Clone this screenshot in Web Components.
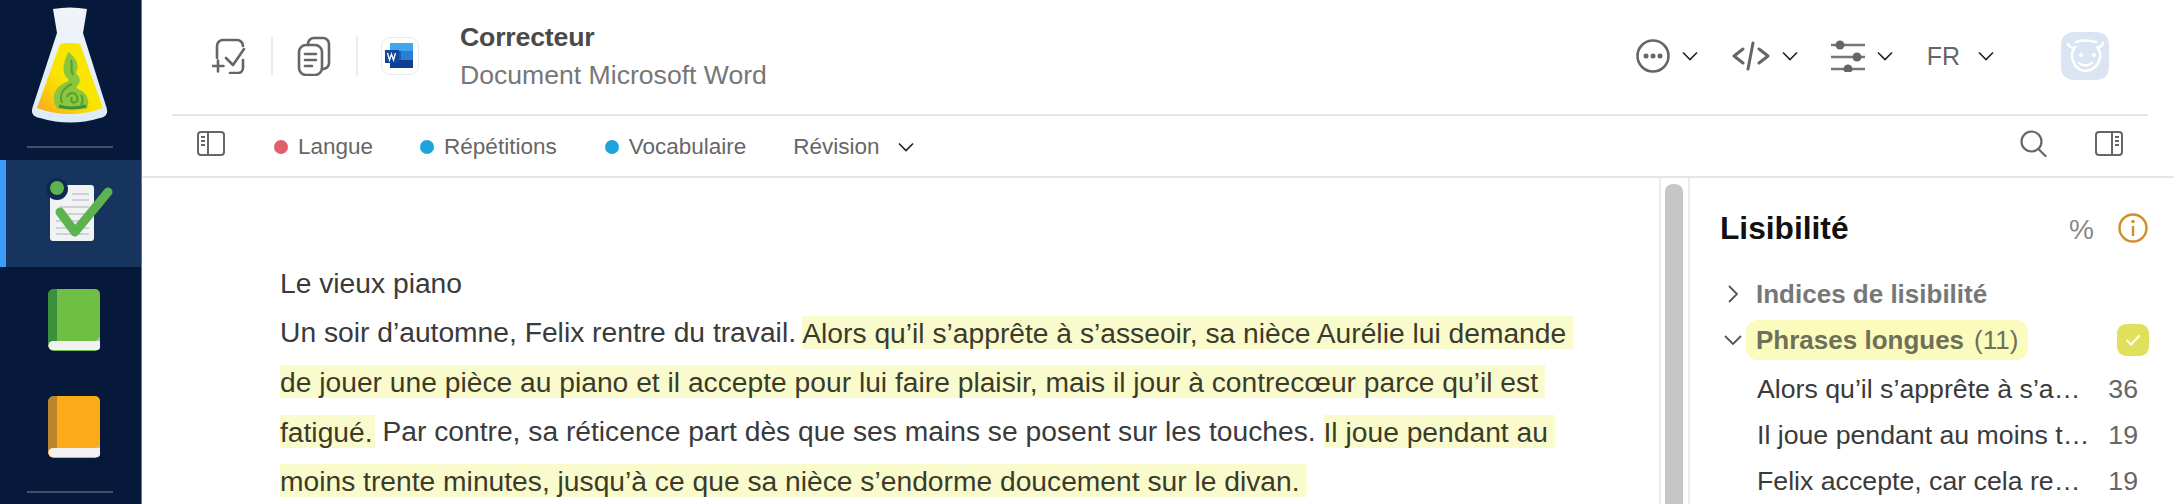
<!DOCTYPE html>
<html lang="fr">
<head>
<meta charset="utf-8">
<title>Correcteur</title>
<style>
  html, body { margin: 0; height: 100%; overflow: hidden; background: #fff; }
  body { font-family: "Liberation Sans", Arial, sans-serif; color: #3a3a3a; }
  mark { color: #3b3b2c; }
</style>
</head>
<body>
<lt-app>
  <lt-sidebar slot="nav"></lt-sidebar>
  <lt-header slot="header"></lt-header>
  <lt-toolbar slot="toolbar"></lt-toolbar>
  <lt-document slot="doc">Le vieux piano<br>Un soir d’automne, Felix rentre du travail. <mark>Alors qu’il s’apprête à s’asseoir, sa nièce Aurélie lui demande</mark><br><mark>de jouer une pièce au piano et il accepte pour lui faire plaisir, mais il jour à contrecœur parce qu’il est</mark><br><mark class="tight">fatigué.</mark> Par contre, sa réticence part dès que ses mains se posent sur les touches. <mark>Il joue pendant au</mark><br><mark>moins trente minutes, jusqu’à ce que sa nièce s’endorme doucement sur le divan.</mark></lt-document>
  <lt-panel slot="panel">
    <lt-row count="36">Alors qu’il s’apprête à s’a…</lt-row>
    <lt-row count="19">Il joue pendant au moins t…</lt-row>
    <lt-row count="19">Felix accepte, car cela re…</lt-row>
  </lt-panel>
</lt-app>

<script>
class LtApp extends HTMLElement {
  constructor() {
    super();
    this.attachShadow({ mode: 'open' });
  }

  connectedCallback() {
    this.shadowRoot.innerHTML = `
      <style>
        :host {
          display: grid;
          grid-template-columns: 142px 1517px 31px 1fr;
          grid-template-rows: 116px 62px 1fr;
          width: 2174px;
          height: 504px;
          overflow: hidden;
        }
        .nav { grid-row: 1 / 4; min-height: 0; }
        .header { grid-column: 2 / 5; }
        .toolbar { grid-column: 2 / 5; }
        .gutter {
          border-left: 2px solid #ececec;
          border-right: 2px solid #ececec;
          padding: 6px 5px 0 4px;
          box-sizing: border-box;
        }
        .thumb { height: 400px; background: #c6c6c6; border-radius: 8px; }
      </style>
      <div class="nav"><slot name="nav"></slot></div>
      <div class="header"><slot name="header"></slot></div>
      <div class="toolbar"><slot name="toolbar"></slot></div>
      <slot name="doc"></slot>
      <div class="gutter"><div class="thumb"></div></div>
      <slot name="panel"></slot>
    `;
  }
}

class LtSidebar extends HTMLElement {
  constructor() {
    super();
    this.attachShadow({ mode: 'open' });
  }

  book(body, spine) {
    return `
      <svg width="54" height="64" viewBox="0 0 54 64">
        <path d="M7 1h41a5 5 0 0 1 5 5v52a5 5 0 0 1-5 5H7a6 6 0 0 1-6-6V7a6 6 0 0 1 6-6z" fill="${body}"/>
        <path d="M10 1H7a6 6 0 0 0-6 6v50h9z" fill="${spine}"/>
        <path d="M6 53h47v6a3 3 0 0 1-3 3H6a4.500 4.500 0 0 1 0-9z" fill="#f1f1f1"/>
        <path d="M7 53h46v-4q-2 3-6 4z" fill="#bdbdbd"/>
      </svg>`;
  }

  connectedCallback() {
    this.shadowRoot.innerHTML = `
      <style>
        :host {
          display: flex;
          flex-direction: column;
          height: 504px;
          background: #07193a;
          border-right: 1px solid #5d7696;
          box-sizing: border-box;
        }
        svg { display: block; }
        .logo { height: 146px; }
        hr {
          flex: none;
          width: 86px;
          height: 2px;
          margin: 0 0 0 27px;
          border: 0;
          background: #414f69;
        }
        .active {
          margin-top: 12px;
          height: 107px;
          background: #17345f;
          border-left: 6px solid #3b9cff;
          box-sizing: border-box;
        }
        .books {
          display: flex;
          flex-direction: column;
          gap: 43px;
          padding: 21px 0 0 47px;
          height: 224px;
          box-sizing: border-box;
        }
      </style>
      <svg class="logo" width="141" height="146" viewBox="0 0 141 146">
        <defs>
          <linearGradient id="liq" x1="0.05" y1="1" x2="0.45" y2="0.5">
            <stop offset="0" stop-color="#fba61c"/>
            <stop offset="0.55" stop-color="#fbcf0a"/>
            <stop offset="1" stop-color="#f9e600"/>
          </linearGradient>
          <linearGradient id="glass" x1="0" y1="0" x2="0" y2="1">
            <stop offset="0" stop-color="#f1f4f8"/>
            <stop offset="1" stop-color="#dcebf7"/>
          </linearGradient>
        </defs>
        <path d="M53 9Q70 6 87 9L83 33 106 106Q110 116 100 118 70 127 40 118 29 116 33 106L57 33Z" fill="url(#glass)"/>
        <path d="M60 44Q70 42 80 44L103 108Q70 120 37 108Z" fill="url(#liq)"/>
        <path d="M69 54C75 60 78 65 75 71 72 76 80 75 78 82 76 87 72 86 78 91 86 94 88 101 86 107 72 109 66 108 58 107 53 99 55 91 62 86 69 82 73 81 68 77 63 72 65 62 69 54Z" fill="#8cc63f" stroke="#8cc63f" stroke-width="3" stroke-linejoin="round"/>
        <path d="M71 60C73 66 70 70 73 75M72 84C63 88 59 95 62 103M67 97C71 89 79 94 77 101 73 105 70 101 72 97M81 95C83 98 83 102 81 105" fill="none" stroke="#559f2e" stroke-width="2"/>
        <path d="M59 106Q71 110 86 106" fill="none" stroke="#3e9430" stroke-width="3"/>
      </svg>
      <hr>
      <div class="active">
        <svg width="112" height="107" viewBox="0 0 112 107">
          <path d="M46 25h39a3 3 0 0 1 3 3v50a3 3 0 0 1-3 3H47a3 3 0 0 1-3-3V30z" fill="#f0f2f4"/>
          <circle cx="51" cy="29" r="11" fill="#0e2a52"/>
          <circle cx="51" cy="28" r="7" fill="#5cb34f"/>
          <path d="M66 34h17M66 40h17M54 47h29M54 54h29M50 61h33M50 68h33M50 74h33" stroke="#cfd2d4" stroke-width="2"/>
          <path d="M54 52L69 72 102 32" fill="none" stroke="#5cb34f" stroke-width="9" stroke-linecap="round" stroke-linejoin="round"/>
        </svg>
      </div>
      <div class="books">
        ${this.book('#6fbf44', '#3a8f3c')}
        ${this.book('#fdaa19', '#b9852d')}
      </div>
      <hr>
    `;
  }
}

class LtChev extends HTMLElement {
  constructor() {
    super();
    this.attachShadow({ mode: 'open' });
    this.shadowRoot.innerHTML = `
      <style>
        :host { display: block; width: 16px; height: 10px; }
        svg { display: block; }
      </style>
      <svg width="16" height="10" viewBox="0 0 16 10"><path d="M1 1.500l7 7 7-7" fill="none" stroke="#222" stroke-width="1.600"/></svg>
    `;
  }
}

class LtHeader extends HTMLElement {
  constructor() {
    super();
    this.attachShadow({ mode: 'open' });
  }

  connectedCallback() {
    this.shadowRoot.innerHTML = `
      <style>
        :host {
          display: flex;
          align-items: center;
          height: 116px;
          margin: 0 26px 0 30px;
          padding: 0 0 2px 40px;
          border-bottom: 2px solid #e6e6e6;
          box-sizing: border-box;
        }
        svg { display: block; flex: none; }
        .rule { flex: none; width: 2px; height: 40px; background: #ececec; }
        .titles { margin-left: 41px; }
        .t1 { font-size: 26.700px; line-height: 30px; font-weight: 700; color: #4a4a4a; letter-spacing: -0.2px; }
        .t2 { font-size: 26.600px; line-height: 30px; margin-top: 8px; color: #777; }
        .spacer { flex: 1; }
        .fr { font-size: 25px; color: #666; }
      </style>
      <svg width="34" height="36" viewBox="0 0 34 36" fill="none" stroke="#666" stroke-width="2.600" stroke-linecap="round" stroke-linejoin="round">
        <path d="M5 20V8a6 6 0 0 1 6-6h14a6 6 0 0 1 6 6v0M31 22v8a5 5 0 0 1-5 5h-8"/>
        <path d="M14 20l7 7 11-16M0.500 28h11M6 22.500v11"/>
      </svg>
      <span class="rule" style="margin-left:25px"></span>
      <svg style="margin-left:24px" width="34" height="40" viewBox="0 0 34 40" fill="none" stroke="#666" stroke-width="2.600" stroke-linecap="round" stroke-linejoin="round">
        <rect x="2" y="9" width="23" height="30" rx="7"/>
        <path d="M11 9V8a6 6 0 0 1 6-6h9a6 6 0 0 1 6 6v19a6 6 0 0 1-6 6h-1"/>
        <path d="M8 18h11M8 24h11M8 30h7"/>
      </svg>
      <span class="rule" style="margin-left:25px"></span>
      <svg style="margin-left:23px" width="38" height="38" viewBox="0 0 38 38">
        <rect x="0.500" y="0.500" width="37" height="37" rx="9" fill="#fff" stroke="#e8e8e8"/>
        <path d="M9 6h23v25H9z" fill="#185abd"/>
        <path d="M9 6h23v8H9z" fill="#41a5ee"/>
        <path d="M20 14h12v9H20z" fill="#2b7cd3"/>
        <path d="M9 23h23v8H9z" fill="#103f91"/>
        <rect x="4" y="13" width="14" height="13" fill="#12479f"/>
        <path d="M6.500 16l2 7 2-6 2 6 2-7" fill="none" stroke="#fff" stroke-width="1.300"/>
      </svg>
      <div class="titles">
        <div class="t1">Correcteur</div>
        <div class="t2">Document Microsoft Word</div>
      </div>
      <span class="spacer"></span>
      <svg width="34" height="34" viewBox="0 0 34 34">
        <circle cx="17" cy="17" r="15.500" fill="none" stroke="#666" stroke-width="2.600"/>
        <circle cx="10" cy="17" r="2.500" fill="#666"/><circle cx="17" cy="17" r="2.500" fill="#666"/><circle cx="24" cy="17" r="2.500" fill="#666"/>
      </svg>
      <lt-chev style="margin-left:12px"></lt-chev>
      <svg style="margin-left:34px" width="38" height="30" viewBox="0 0 38 30" fill="none" stroke="#666" stroke-width="3" stroke-linecap="round" stroke-linejoin="round">
        <path d="M11 8l-9 7 9 7M27 8l9 7-9 7M21 2l-5 26"/>
      </svg>
      <lt-chev style="margin-left:12px"></lt-chev>
      <svg style="margin-left:33px" width="34" height="32" viewBox="0 0 34 32">
        <path d="M0 5h34M0 17h34M0 29h34" stroke="#777" stroke-width="2.600"/>
        <circle cx="9" cy="5" r="4.500" fill="#666"/><circle cx="26" cy="17" r="4.500" fill="#666"/><circle cx="17" cy="29" r="4.500" fill="#666"/>
      </svg>
      <lt-chev style="margin-left:12px"></lt-chev>
      <span class="fr" style="margin-left:34px">FR</span>
      <lt-chev style="margin-left:18px"></lt-chev>
      <svg style="margin:0 39px 0 67px" width="48" height="48" viewBox="0 0 48 48">
        <path d="M13 0h22c8 0 13 5 13 13v22c0 8-5 13-13 13H13C5 48 0 43 0 35V13C0 5 5 0 13 0z" fill="#dbe4f3"/>
        <g fill="none" stroke="#fff" stroke-width="2.500" stroke-linecap="round" stroke-linejoin="round">
          <path d="M15 10q9-3 20 0"/>
          <path d="M7 12q2 4 6 4M42 11q-1 4-5 5"/>
          <path d="M14 15q-4 6-3 11 3 12 13 13 12-1 15-13 1-6-3-11"/>
          <path d="M18 31q6 5 13 0" stroke-width="2.200"/>
        </g>
        <circle cx="20" cy="23" r="2" fill="#fff"/><circle cx="33" cy="23" r="2" fill="#fff"/>
      </svg>
    `;
  }
}

class LtToolbar extends HTMLElement {
  constructor() {
    super();
    this.attachShadow({ mode: 'open' });
  }

  connectedCallback() {
    this.shadowRoot.innerHTML = `
      <style>
        :host {
          display: flex;
          align-items: center;
          height: 62px;
          padding: 1px 51px 0 55px;
          border-bottom: 2px solid #e6e6e6;
          box-sizing: border-box;
          font-size: 22.500px;
          color: #666;
        }
        svg { display: block; flex: none; }
        .up { margin-top: -7px; }
        .dot { flex: none; width: 14px; height: 14px; border-radius: 50%; margin-right: 10px; }
        .spacer { flex: 1; }
      </style>
      <svg class="up" width="28" height="25" viewBox="0 0 28 25" fill="none" stroke="#666" stroke-width="2">
        <rect x="1" y="1" width="26" height="23" rx="3"/>
        <path d="M11 1v23M4 6h4M4 10h4M4 14h4" />
      </svg>
      <span class="dot" style="margin-left:49px;background:#e0606e"></span><span>Langue</span>
      <span class="dot" style="margin-left:47px;background:#1fa3dc"></span><span>Répétitions</span>
      <span class="dot" style="margin-left:48px;background:#1fa3dc"></span><span>Vocabulaire</span>
      <span style="margin-left:47px">Révision</span>
      <lt-chev style="margin-left:18px"></lt-chev>
      <span class="spacer"></span>
      <svg class="up" width="27" height="27" viewBox="0 0 27 27" fill="none" stroke="#666" stroke-width="2.200" stroke-linecap="round">
        <circle cx="11.500" cy="11.500" r="10"/><path d="M18.500 19l7 7"/>
      </svg>
      <svg class="up" style="margin-left:48px" width="28" height="25" viewBox="0 0 28 25" fill="none" stroke="#666" stroke-width="2">
        <rect x="1" y="1" width="26" height="23" rx="3"/>
        <path d="M17 1v23M20 6h4M20 10h4M20 14h4"/>
      </svg>
    `;
  }
}

class LtDocument extends HTMLElement {
  constructor() {
    super();
    this.attachShadow({ mode: 'open' });
  }

  connectedCallback() {
    this.shadowRoot.innerHTML = `
      <style>
        :host {
          display: block;
          padding: 81px 0 0 138px;
          font-size: 28.230px;
          line-height: 49.400px;
          color: #3a3a3a;
          white-space: nowrap;
          overflow: hidden;
        }
        ::slotted(mark) { background: #fafbcd; padding: 0.5px 7px 0.5px 0; }
        ::slotted(mark.tight) { padding-right: 2px; }
      </style>
      <slot></slot>
    `;
  }
}

class LtRow extends HTMLElement {
  constructor() {
    super();
    this.attachShadow({ mode: 'open' });
  }

  connectedCallback() {
    this.shadowRoot.innerHTML = `
      <style>
        :host {
          display: flex;
          justify-content: space-between;
          height: 46px;
          line-height: 46px;
          padding: 0 36px 0 67px;
          font-size: 26.700px;
          color: #3a3a3a;
          white-space: nowrap;
        }
        .n { color: #666; }
      </style>
      <span><slot></slot></span>
      <span class="n">${this.getAttribute('count')}</span>
    `;
  }
}

class LtPanel extends HTMLElement {
  constructor() {
    super();
    this.attachShadow({ mode: 'open' });
  }

  connectedCallback() {
    this.shadowRoot.innerHTML = `
      <style>
        :host { display: block; }
        svg { display: block; flex: none; }
        .head {
          display: flex;
          align-items: center;
          height: 36px;
          margin-top: 32px;
          padding: 0 26px 0 30px;
        }
        h2 { flex: 1; margin: 0; font-size: 31.700px; font-weight: 700; color: #111; }
        .pct { font-size: 28px; font-weight: 400; color: #888; margin: 4px 24px 0 0; }
        .group {
          display: flex;
          align-items: center;
          height: 40px;
          font-size: 26px;
          font-weight: 700;
          color: #777;
        }
        .g1 { margin-top: 28px; padding-left: 38px; gap: 18px; }
        .g2 { margin-top: 6px; padding-left: 34px; }
        .pill {
          display: flex;
          gap: 10px;
          align-items: center;
          height: 40px;
          margin-left: 4px;
          padding: 0 10px;
          background: #fafbbd;
          border-radius: 12px;
          color: #6f7058;
        }
        .pill i { font-style: normal; font-weight: 400; }
        .box {
          display: flex;
          align-items: center;
          justify-content: center;
          width: 32px;
          height: 32px;
          margin-left: 89px;
          background: #e1e05c;
          border-radius: 9px;
        }
        .rows { margin-top: 6px; }
      </style>
      <div class="head">
        <h2>Lisibilité</h2>
        <span class="pct">%</span>
        <svg width="30" height="30" viewBox="0 0 30 30">
          <circle cx="15" cy="15" r="13.500" fill="none" stroke="#d08f2a" stroke-width="2.400"/>
          <circle cx="15" cy="8.500" r="1.700" fill="#d08f2a"/>
          <path d="M15 13v10" stroke="#d08f2a" stroke-width="2.400"/>
        </svg>
      </div>
      <div class="group g1">
        <svg width="10" height="18" viewBox="0 0 10 18"><path d="M1 1l8 8-8 8" fill="none" stroke="#555" stroke-width="1.800"/></svg>
        <span>Indices de lisibilité</span>
      </div>
      <div class="group g2">
        <svg width="18" height="10" viewBox="0 0 18 10"><path d="M1 1l8 8 8-8" fill="none" stroke="#555" stroke-width="1.800"/></svg>
        <div class="pill"><span>Phrases longues</span><i>(11)</i></div>
        <div class="box">
          <svg width="16" height="12" viewBox="0 0 16 12"><path d="M1.500 6l4.500 4.500 8.500-9" fill="none" stroke="#fff" stroke-width="2"/></svg>
        </div>
      </div>
      <div class="rows"><slot></slot></div>
    `;
  }
}

customElements.define('lt-app', LtApp);
customElements.define('lt-sidebar', LtSidebar);
customElements.define('lt-chev', LtChev);
customElements.define('lt-header', LtHeader);
customElements.define('lt-toolbar', LtToolbar);
customElements.define('lt-document', LtDocument);
customElements.define('lt-row', LtRow);
customElements.define('lt-panel', LtPanel);
</script>
</body>
</html>
